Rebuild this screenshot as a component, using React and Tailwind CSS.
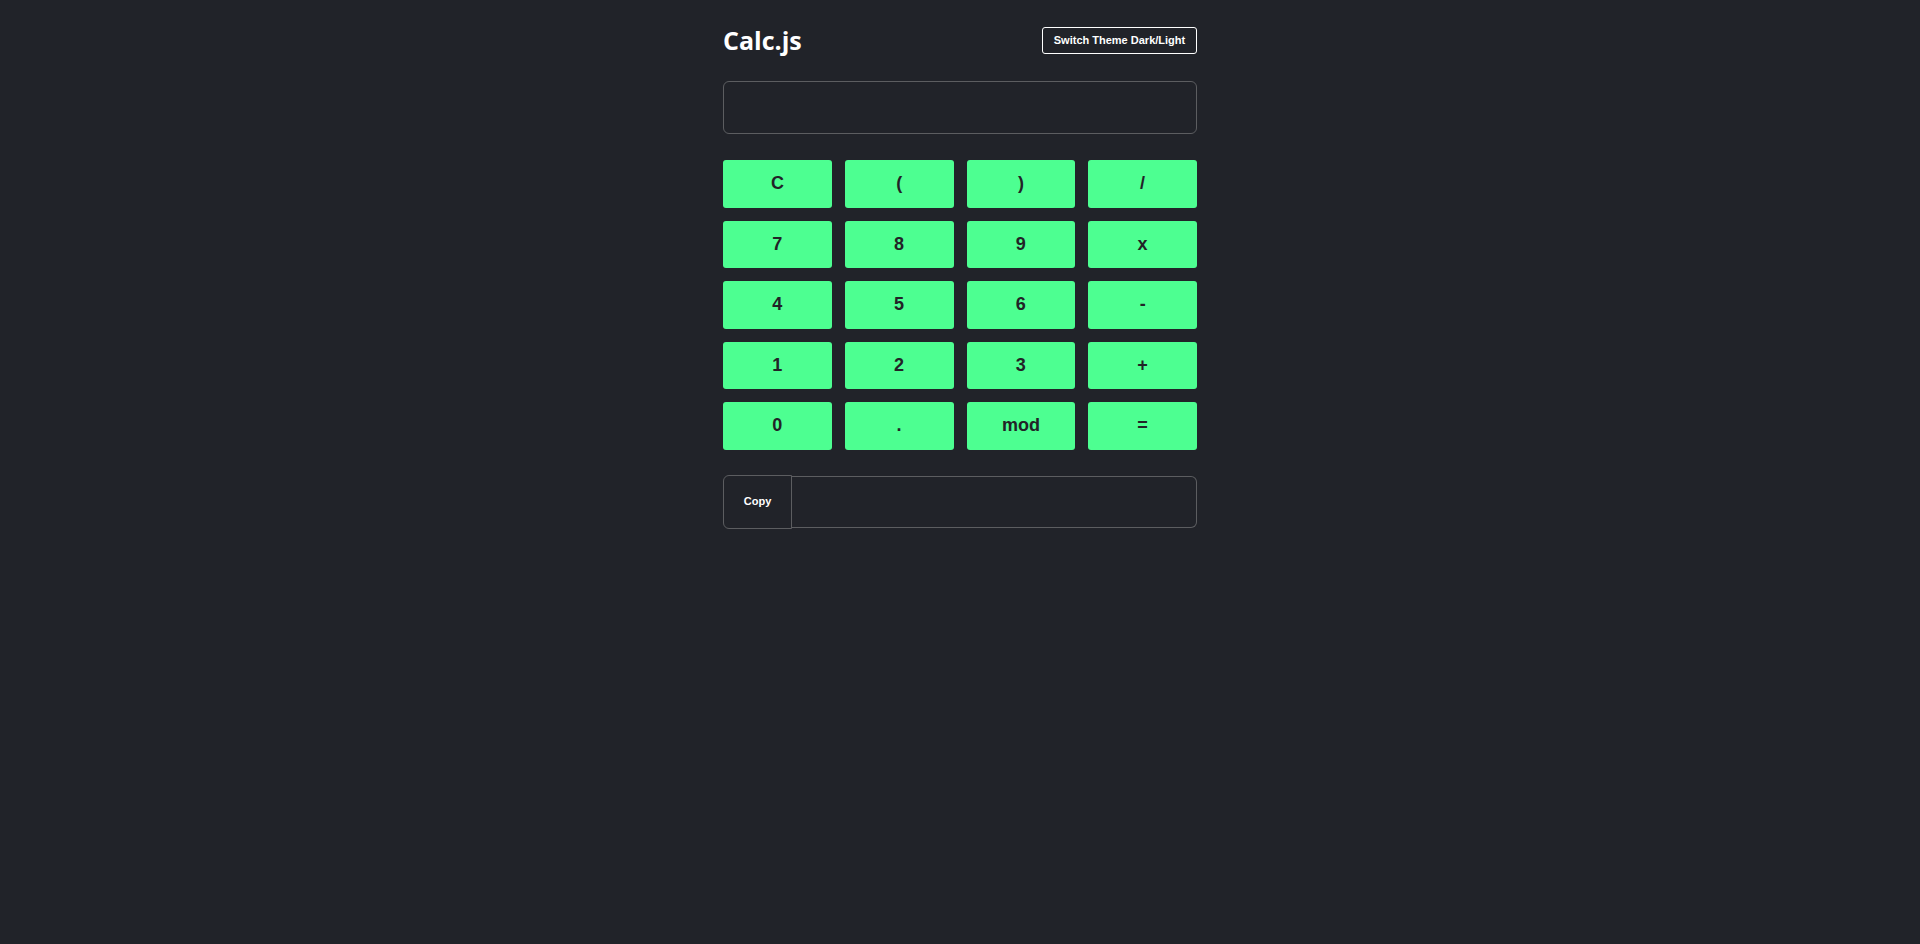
import React from "react";

const keys = ["C", "(", ")", "/", "7", "8", "9", "x", "4", "5", "6", "-", "1", "2", "3", "+", "0", ".", "mod", "="];

export default function App() {
  return (
    <div className="min-h-[944px] w-full bg-[#212329]" style={{ fontFamily: "'Liberation Sans', Arial, sans-serif" }}>
      <div className="mx-auto w-[474px] pt-[27px]">
        <div className="flex items-center justify-between h-[27px]">
          <h1 className="text-[25px] font-bold text-white leading-none" style={{ fontFamily: "'Open Sans', 'Noto Sans', sans-serif" }}>Calc.js</h1>
          <button className="h-[27px] w-[155px] rounded-[3px] border border-white text-[11px] font-bold text-white bg-transparent">
            Switch Theme Dark/Light
          </button>
        </div>
        <div className="mt-[27px] h-[53px] rounded-[6px] border border-[#5c5d60]"></div>
        <div className="mt-[26px] grid grid-cols-4 gap-x-[13px] gap-y-[13px]">
          {keys.map((k) => (
            <button key={k} className="h-[47.5px] rounded-[3px] bg-[#4dff91] text-[18px] font-bold text-[#222327]">
              {k}
            </button>
          ))}
        </div>
        <div className="mt-[25px] flex items-center">
          <button className="h-[54px] w-[69px] rounded-l-[6px] border border-[#5c5d60] text-[11px] font-bold text-white">Copy</button>
          <div className="h-[52px] flex-1 rounded-r-[6px] border border-l-0 border-[#5c5d60]"></div>
        </div>
      </div>
    </div>
  );
}
